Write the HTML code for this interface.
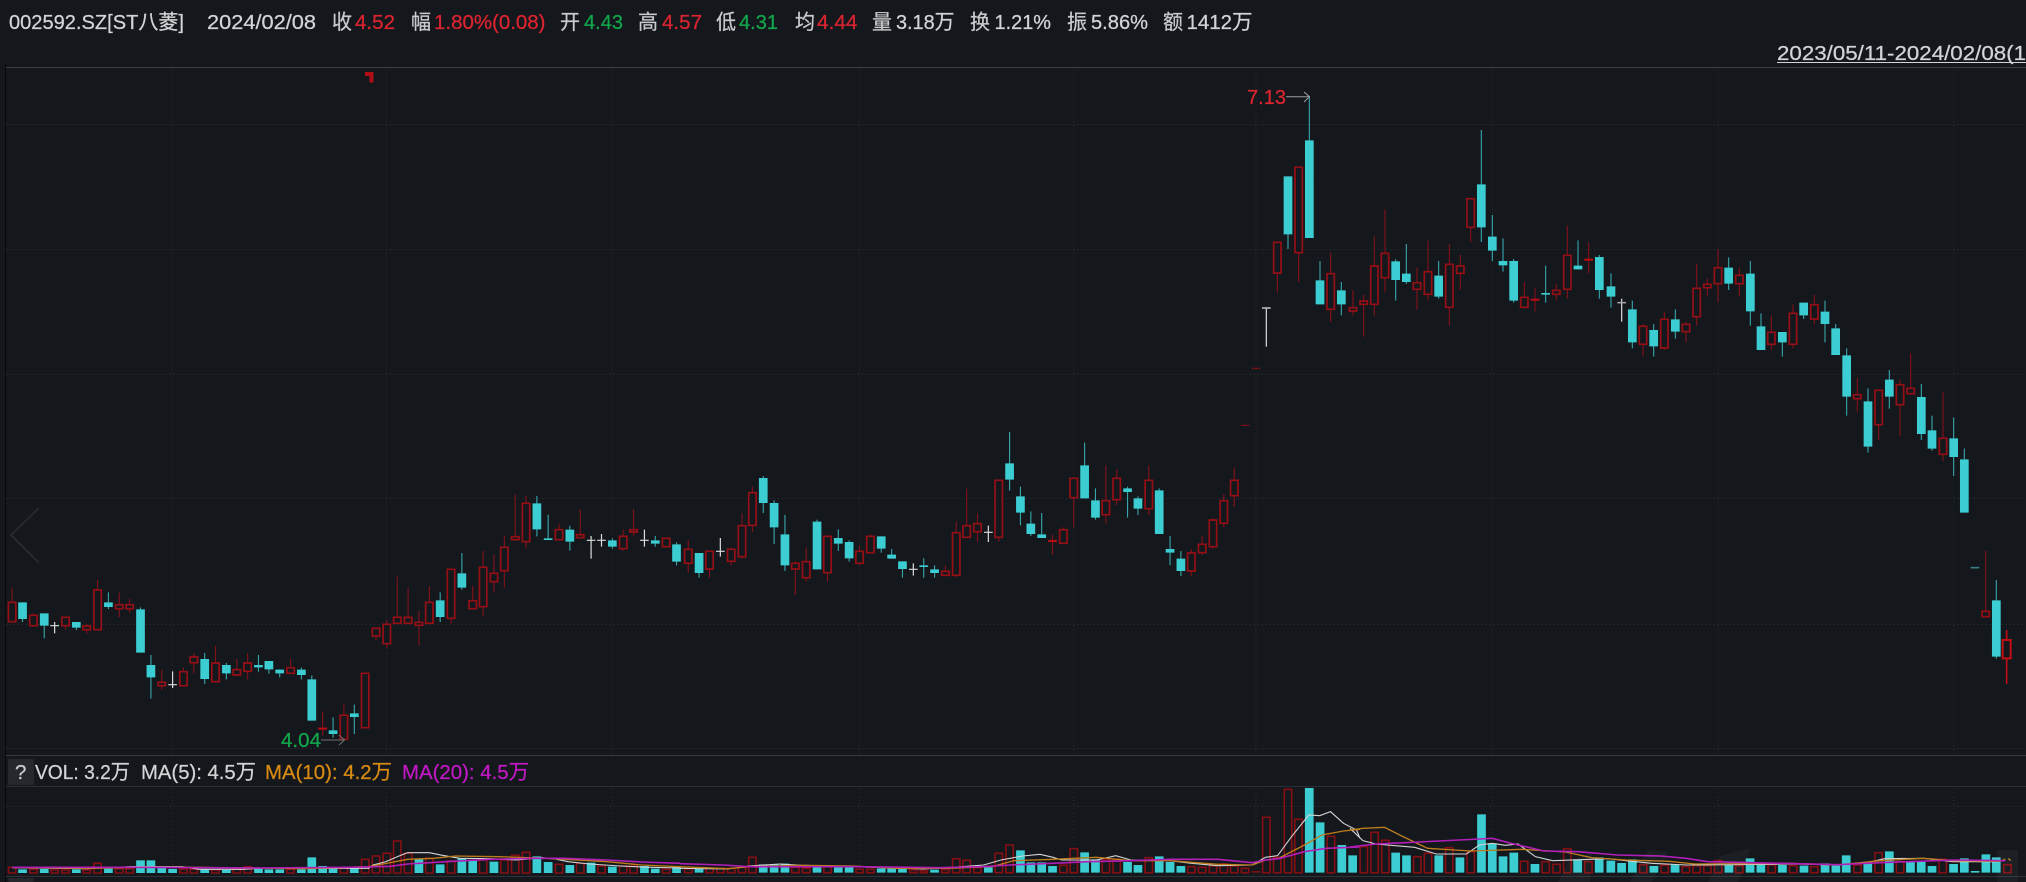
<!DOCTYPE html>
<html>
<head>
<meta charset="utf-8">
<title>002592.SZ</title>
<style>
html,body{margin:0;padding:0;background:#14181d;width:2026px;height:882px;overflow:hidden}
svg{display:block;position:absolute;left:0;top:0}
path,polyline{vector-effect:non-scaling-stroke}
text{font-family:"Liberation Sans","Noto Sans CJK SC",sans-serif;font-size:20.500px;stroke-width:.25px}
.w{fill:none;stroke:#84101a;stroke-width:1.1}
.t{fill:none;stroke:#37a6ab;stroke-width:1.1}
.rb{fill:#14181d;stroke:#950f15;stroke-width:1.7}
.tb{fill:none;stroke:#3bcdd2;stroke-width:8.7}
.wh{fill:none;stroke:#dcdcdc;stroke-width:1.2}
.dr{fill:none;stroke:#b50d12;stroke-width:2.2}
.vr{fill:none;stroke:#860f14;stroke-width:1.6}
.ma5{fill:none;stroke:#d4d4d4;stroke-width:1.1}
.ma10{fill:none;stroke:#bd7d1c;stroke-width:1.3}
.ma20{fill:none;stroke:#b21eb8;stroke-width:1.6}
.l{fill:#c8cacc;stroke:#c8cacc}
.v{fill:#d2d4d6;stroke:#d2d4d6}
.r{fill:#dc2430;stroke:#dc2430}
.g{fill:#12a64b;stroke:#12a64b}
.o{fill:#d98a12;stroke:#d98a12}
.m{fill:#c318c6;stroke:#c318c6}
</style>
</head>
<body>
<svg width="2026" height="882" viewBox="0 0 2026 882" xmlns="http://www.w3.org/2000/svg">
<rect width="2026" height="882" fill="#14181d"/>

<!-- grid -->
<g fill="none" stroke="#30343a" stroke-width="1" stroke-dasharray="1 3">
<path d="M6 124.500H2026M6 249.500H2026M6 374.500H2026M6 498.500H2026M6 624.500H2026M6 748.500H2026M6 806.500H2026"/>
</g>
<g fill="none" stroke="#2a2e33" stroke-width="1" stroke-dasharray="1 3">
<path d="M172.500 69V755M386.500 69V755M612.500 69V755M859.500 69V755M1073.500 69V755M1256 69V755M1492.500 69V755M1718 69V755M1953.500 69V755"/>
<path d="M172.500 788V875M386.500 788V875M612.500 788V875M859.500 788V875M1073.500 788V875M1256 788V875M1492.500 788V875M1718 788V875M1953.500 788V875"/>
</g>
<!-- frame lines -->
<rect x="6" y="67" width="2020" height="1" fill="#3c3f44"/>
<rect x="5" y="64" width="1" height="818" fill="#08090b"/>
<rect x="6" y="755" width="2020" height="1" fill="#35383d"/>
<rect x="6" y="786" width="2020" height="1" fill="#2b2e33"/>
<rect x="6" y="876" width="2020" height="1" fill="#2f3237"/>
<rect x="8" y="878" width="26" height="4" rx="2" fill="#24272b"/>

<!-- header -->
<text class="v" x="9" y="29" textLength="175" lengthAdjust="spacingAndGlyphs">002592.SZ[ST八菱]</text>
<text class="v" x="207" y="29" textLength="109" lengthAdjust="spacingAndGlyphs">2024/02/08</text>
<text class="l" x="332" y="29" textLength="20" lengthAdjust="spacingAndGlyphs">收</text><text class="r" x="355" y="29" textLength="40" lengthAdjust="spacingAndGlyphs">4.52</text>
<text class="l" x="411" y="29" textLength="20" lengthAdjust="spacingAndGlyphs">幅</text><text class="r" x="434" y="29" textLength="111.500" lengthAdjust="spacingAndGlyphs">1.80%(0.08)</text>
<text class="l" x="560" y="29" textLength="20" lengthAdjust="spacingAndGlyphs">开</text><text class="g" x="584" y="29" textLength="39" lengthAdjust="spacingAndGlyphs">4.43</text>
<text class="l" x="638" y="29" textLength="20" lengthAdjust="spacingAndGlyphs">高</text><text class="r" x="662" y="29" textLength="40" lengthAdjust="spacingAndGlyphs">4.57</text>
<text class="l" x="716" y="29" textLength="20" lengthAdjust="spacingAndGlyphs">低</text><text class="g" x="739" y="29" textLength="39" lengthAdjust="spacingAndGlyphs">4.31</text>
<text class="l" x="795" y="29" textLength="20" lengthAdjust="spacingAndGlyphs">均</text><text class="r" x="817" y="29" textLength="40.500" lengthAdjust="spacingAndGlyphs">4.44</text>
<text class="l" x="872" y="29" textLength="20" lengthAdjust="spacingAndGlyphs">量</text><text class="v" x="896" y="29" textLength="58.500" lengthAdjust="spacingAndGlyphs">3.18万</text>
<text class="l" x="970" y="29" textLength="20" lengthAdjust="spacingAndGlyphs">换</text><text class="v" x="994.500" y="29" textLength="56.500" lengthAdjust="spacingAndGlyphs">1.21%</text>
<text class="l" x="1067" y="29" textLength="20" lengthAdjust="spacingAndGlyphs">振</text><text class="v" x="1091" y="29" textLength="57" lengthAdjust="spacingAndGlyphs">5.86%</text>
<text class="l" x="1163" y="29" textLength="20" lengthAdjust="spacingAndGlyphs">额</text><text class="v" x="1186.500" y="29" textLength="66" lengthAdjust="spacingAndGlyphs">1412万</text>

<text class="v" x="1777" y="60" textLength="249" lengthAdjust="spacingAndGlyphs">2023/05/11-2024/02/08(1</text>
<rect x="1777" y="62" width="249" height="1" fill="#d2d4d6"/>

<!-- red flag marker -->
<path d="M365 72H373.500V82.500H369.500V76H365Z" fill="#b00d14"/>

<!-- left chevron -->
<polyline points="39,508 11,535 39,562.700" fill="none" stroke="#25282c" stroke-width="2"/>

<!-- candles A -->
<g transform="translate(0 480) scale(.43367 .33333)">
<path class="w" d="M28 323V425M77 400V437M151 412V449M200 432V461M225 300V449M275 338V411M299 355V399M373 569V630M423 563V617M447 519V580M497 498V605M546 537V585M571 519V598M670 537V580M744 694V767M793 674V778M867 444V480M892 420V505M916 289V430M941 324V430M966 393V497M990 318V430M1040 268V431M1090 318V386M1114 213V410M1139 224V338M1163 168V323M1188 43V179M1213 48V206M1289 131V179M1338 87V173M1437 149V212M1461 87V168"/>
<path class="t" d="M52 367V426M102 400V475M176 426V450M250 337V387M324 382V518M348 525V656M472 519V612M522 549V598M596 525V575M620 543V581M645 568V592M695 563V598M719 586V722M768 712V773M817 674V762M1015 337V426M1065 219V329M1238 48V169M1264 104V180M1314 137V212M1412 175V206M1511 168V200M1560 187V256"/>
<path class="rb" d="M28 367h8.500V425h-17V367zM77 406h8.500V437h-17V406zM151 412h8.500V437h-17V412zM200 438h8.500V449h-17V438zM225 330h8.500V449h-17V330zM275 374h8.500V386h-17V374zM299 374h8.500V386h-17V374zM373 607h8.500V617h-17V607zM423 575h8.500V617h-17V575zM447 531h8.500V548h-17V531zM497 549h8.500V605h-17V549zM546 569h8.500V585h-17V569zM571 549h8.500V574h-17V549zM670 563h8.500V580h-17V563zM793 706h8.500V778h-17V706zM842 580h8.500V743h-17V580zM867 445h8.500V468h-17V445zM892 433h8.500V491h-17V433zM916 412h8.500V430h-17V412zM941 412h8.500V430h-17V412zM966 427h8.500V436h-17V427zM990 367h8.500V430h-17V367zM1040 268h8.500V415h-17V268zM1090 362h8.500V386h-17V362zM1114 262h8.500V380h-17V262zM1139 280h8.500V305h-17V280zM1163 202h8.500V272h-17V202zM1188 170h8.500V179h-17V170zM1213 70h8.500V185h-17V70zM1289 149h8.500V179h-17V149zM1338 164h8.500V173h-17V164zM1437 169h8.500V206h-17V169zM1461 149h8.500V156h-17V149zM1536 175h8.500V200h-17V175z"/>
<path class="tb" d="M52 367V417M102 400V437M176 426V443M250 367V381M324 388V518M348 555V592M472 537V597M522 555V580M596 555V562M620 543V568M645 569V580M695 569V585M719 598V722M768 751V762M817 700V711M1015 361V411M1065 280V323M1238 70V148M1264 175V180M1314 149V185M1412 181V200M1511 181V191M1560 193V245"/>
<path class="wh" d="M126 426V460M116 437h20M398 574V624M388 614h20M1363 168V236M1353 181h20M1387 162V200M1377 181h20M1486 149V200M1476 181h20"/>
<path class="dr" d="M734 746h20"/>
</g>

<!-- candles B -->
<g transform="translate(680 400) scale(.43367 .33333)">
<path class="w" d="M19 420V518M68 454V533M118 442V496M143 340V476M167 260V396M266 484V584M291 442V545M340 409V545M414 438V496M439 403V458M612 496V526M637 365V532M661 266V412M686 340V426M735 241V425M859 403V464M884 382V430M908 235V382M982 196V370M1007 208V315M1081 196V345M1179 447V528M1204 408V465M1229 355V446M1254 283V382M1278 202V321"/>
<path class="t" d="M44 459V533M192 228V339M217 301V432M242 345V513M316 359V508M365 388V453M390 421V485M464 409V458M488 447V476M513 484V533M562 475V533M587 496V533M760 96V272M785 260V376M809 334V408M834 339V414M933 128V295M958 265V359M1032 260V353M1056 289V345M1105 265V402M1130 408V496M1155 453V528"/>
<path class="rb" d="M19 448h8.500V490h-17V448zM68 454h8.500V507h-17V454zM118 448h8.500V484h-17V448zM143 377h8.500V470h-17V377zM167 278h8.500V376h-17V278zM266 490h8.500V507h-17V490zM291 485h8.500V533h-17V485zM340 409h8.500V518h-17V409zM414 454h8.500V490h-17V454zM439 409h8.500V458h-17V409zM612 514h8.500V526h-17V514zM637 398h8.500V526h-17V398zM661 377h8.500V412h-17V377zM686 371h8.500V395h-17V371zM735 241h8.500V412h-17V241zM884 389h8.500V430h-17V389zM908 235h8.500V293h-17V235zM982 302h8.500V344h-17V302zM1007 235h8.500V299h-17V235zM1081 241h8.500V326h-17V241zM1179 459h8.500V513h-17V459zM1204 433h8.500V458h-17V433zM1229 360h8.500V440h-17V360zM1254 302h8.500V370h-17V302zM1278 241h8.500V287h-17V241z"/>
<path class="tb" d="M44 459V519M192 234V309M217 309V382M242 403V496M316 365V508M365 414V431M390 426V475M464 409V446M488 464V476M513 484V507M562 496V501M587 508V519M760 190V239M785 289V338M809 371V402M834 403V414M933 196V295M958 301V353M1032 265V276M1056 295V326M1105 271V402M1130 447V458M1155 476V513"/>
<path class="wh" d="M93 414V470M83 454h20M538 490V527M528 508h20M711 377V426M701 397h20"/>
<path class="dr" d="M849 423h20"/>
<path class="w" d="M1293 76h20"/>
</g>

<!-- candles C -->
<g transform="translate(1200 80) scale(.33333)">
<path class="w" d="M155 865h26M232 487V638M296 262V606M392 518V726M459 630V706M491 645V770M523 470V706M555 388V638M651 563V688M684 482V662M748 492V738M781 525V630M812 356V486M973 606V682M1005 625V694M1069 612V662M1102 437V656M1166 487V580"/>
<path class="t" d="M264 289V507M328 50V474M360 543V673M424 606V706M587 538V662M619 492V612M716 543V656M844 150V486M877 405V543M909 475V575M941 537V668M1037 557V668M1134 481V568M1198 525V656M1233 580V683"/>
<path class="rb" d="M232 487h11V579h-22V487zM296 262h11V518h-22V262zM392 581h11V688h-22V581zM459 683h11V693h-22V683zM491 663h11V673h-22V663zM523 558h11V673h-22V558zM555 520h11V593h-22V520zM651 608h11V628h-22V608zM684 575h11V643h-22V575zM748 553h11V682h-22V553zM781 558h11V580h-22V558zM812 356h11V442h-22V356zM973 652h11V682h-22V652zM1069 631h11V643h-22V631zM1102 526h11V628h-22V526z"/>
<path class="tb" d="M264 289V463M328 181V474M360 601V673M424 631V673M587 544V600M619 581V606M716 587V650M844 313V442M877 470V512M909 543V556M941 543V662M1037 639V644M1134 557V568M1198 531V630M1233 619V650"/>
<path class="wh" d="M199 684V800"/>
<path fill="none" stroke="#a8a8a8" stroke-width="1.800" d="M186 684h26"/>
<path class="dr" d="M992 659h26M1153 539h26"/>
</g>

<!-- candles D -->
<g transform="translate(1600 220) scale(.33333)">
<path class="w" d="M129 312V410M193 275V390M258 306V367M290 131V317M322 175V230M354 87V247M418 143V230M514 286V390M579 254V385M643 225V312M772 473V575M836 511V660M900 479V648M932 400V521M1029 517V723"/>
<path class="t" d="M97 242V385M161 312V410M226 268V356M386 112V210M451 123V317M483 280V390M547 336V410M611 248V297M675 242V367M707 312V405M740 385V587M804 505V698M868 450V566M964 492V660M996 587V692M1061 593V768M1093 686V718"/>
<path class="rb" d="M129 319h11V373h-22V319zM193 298h11V384h-22V298zM258 313h11V335h-22V313zM290 205h11V290h-22V205zM322 193h11V203h-22V193zM354 143h11V191h-22V143zM418 166h11V191h-22V166zM514 337h11V373h-22V337zM579 280h11V373h-22V280zM643 254h11V297h-22V254zM772 524h11V536h-22V524zM836 511h11V614h-22V511zM900 494h11V554h-22V494zM932 505h11V521h-22V505zM1029 655h11V703h-22V655z"/>
<path class="tb" d="M97 268V367M161 330V379M226 298V335M386 143V191M451 161V274M483 319V390M547 336V367M611 248V286M675 275V312M707 325V405M740 406V530M804 544V680M868 479V530M964 531V642M996 631V686M1061 655V711M1093 718V878"/>
<path class="wh" d="M65 236V305"/>
<path fill="none" stroke="#a8a8a8" stroke-width="1.500" d="M52 248h26"/>
</g>

<!-- candles E -->
<g transform="translate(1700 500) scale(.33333)">
<path fill="none" stroke="#3a7f86" stroke-width="1.600" d="M812 203h26"/>
<path class="w" d="M857 153V350"/>
<path class="rb" d="M857 334h11V350h-22V334z"/>
<path class="t" d="M889 240V476"/>
<path class="tb" d="M889 301V470"/>
<path fill="none" stroke="#c20d12" stroke-width="1.600" d="M920 390V552"/>
<path fill="#14181d" stroke="#c20d12" stroke-width="2" d="M920 420h12V475h-24V420z"/>
</g>

<!-- high / low labels -->
<text class="r" x="1247" y="104" textLength="39" lengthAdjust="spacingAndGlyphs">7.13</text>
<path d="M1286 96.700H1309M1304 92L1309.500 96.700L1304 102" fill="none" stroke="#9a9ea0" stroke-width="1"/>
<text class="g" x="281" y="747" textLength="40" lengthAdjust="spacingAndGlyphs">4.04</text>
<path d="M321 740H344M339 735L344.500 740L339 745" fill="none" stroke="#6e6e6e" stroke-width="1"/>

<!-- volume legend -->
<rect x="8" y="759" width="26" height="26" rx="2" fill="#25282c"/>
<text class="l" x="15" y="779">?</text>
<text class="v" x="35" y="779" textLength="95" lengthAdjust="spacingAndGlyphs">VOL: 3.2万</text>
<text class="v" x="141" y="779" textLength="115" lengthAdjust="spacingAndGlyphs">MA(5): 4.5万</text>
<text class="o" x="265" y="779" textLength="127" lengthAdjust="spacingAndGlyphs">MA(10): 4.2万</text>
<text class="m" x="402" y="779" textLength="127" lengthAdjust="spacingAndGlyphs">MA(20): 4.5万</text>

<!-- volume 1 -->
<g transform="translate(0 750) scale(.43367 .33333)">
<path class="tb" d="M52 358V369M102 357V369M176 358V369M250 356V369M324 331V369M348 331V369M373 352V369M398 357V369M472 358V369M522 360V369M596 357V369M620 358V369M645 358V369M695 358V369M719 322V369M744 348V369M768 352V369M817 354V369M966 328V369M1015 343V369M1065 325V369M1090 333V369M1139 335V369M1238 319V369M1264 336V369M1314 345V369M1363 338V369M1412 350V369M1486 348V369M1511 356V369M1560 350V369"/>
<path class="vr" d="M28 352h8.500V369h-17V352zM77 358h8.500V369h-17V358zM126 360h8.500V369h-17V360zM151 360h8.500V369h-17V360zM200 360h8.500V369h-17V360zM225 340h8.500V369h-17V340zM275 356h8.500V369h-17V356zM299 356h8.500V369h-17V356zM423 358h8.500V369h-17V358zM447 358h8.500V369h-17V358zM497 360h8.500V369h-17V360zM546 358h8.500V369h-17V358zM571 350h8.500V369h-17V350zM670 358h8.500V369h-17V358zM793 354h8.500V369h-17V354zM842 328h8.500V369h-17V328zM867 318h8.500V369h-17V318zM892 310h8.500V369h-17V310zM916 273h8.500V369h-17V273zM941 310h8.500V369h-17V310zM990 325h8.500V369h-17V325zM1040 333h8.500V369h-17V333zM1114 330h8.500V369h-17V330zM1163 330h8.500V369h-17V330zM1188 316h8.500V369h-17V316zM1213 307h8.500V369h-17V307zM1289 343h8.500V369h-17V343zM1338 340h8.500V369h-17V340zM1387 348h8.500V369h-17V348zM1437 348h8.500V369h-17V348zM1461 348h8.500V369h-17V348zM1536 358h8.500V369h-17V358z"/>
<path class="ma5" d="M28 353L200 356L300 350L420 350L460 358L560 358L600 355L850 355L860 345L890 335L920 318L940 308L990 308L1020 316L1060 325L1130 326L1160 328L1190 330L1250 323L1280 327L1310 335L1360 342L1430 348L1500 352L1568 354"/>
<path class="ma10" d="M28 352L200 355L320 352L450 352L560 354L700 356L850 350L900 338L940 328L1000 325L1050 318L1150 320L1260 325L1400 335L1480 345L1568 350"/>
<path class="ma20" d="M28 352L300 352L600 354L800 352L900 349L940 342L1030 335L1130 328L1230 325L1300 325L1400 330L1480 336L1568 340"/>
</g>

<!-- volume 2 -->
<g transform="translate(680 770) scale(.43367 .33333)">
<path class="tb" d="M44 295V308M192 283V308M217 283V308M242 281V308M316 291V308M365 292V308M390 292V308M464 295V308M488 295V308M513 290V308M587 299V308M711 292V308M785 241V308M809 277V308M834 277V308M859 288V308M933 247V308M958 268V308M1032 276V308M1056 285V308M1105 259V308M1130 276V308M1155 288V308M1451 54V308M1476 157V308M1526 225V308M1551 256V308"/>
<path class="vr" d="M19 297h8.500V308h-17V297zM68 295h8.500V308h-17V295zM93 295h8.500V308h-17V295zM118 295h8.500V308h-17V295zM143 292h8.500V308h-17V292zM167 262h8.500V308h-17V262zM266 292h8.500V308h-17V292zM291 295h8.500V308h-17V295zM340 290h8.500V308h-17V290zM414 298h8.500V308h-17V298zM439 298h8.500V308h-17V298zM538 300h8.500V308h-17V300zM562 302h8.500V308h-17V302zM612 299h8.500V308h-17V299zM637 266h8.500V308h-17V266zM661 271h8.500V308h-17V271zM686 293h8.500V308h-17V293zM735 250h8.500V308h-17V250zM760 225h8.500V308h-17V225zM884 286h8.500V308h-17V286zM908 236h8.500V308h-17V236zM982 268h8.500V308h-17V268zM1007 268h8.500V308h-17V268zM1081 263h8.500V308h-17V263zM1179 290h8.500V308h-17V290zM1204 292h8.500V308h-17V292zM1229 288h8.500V308h-17V288zM1254 282h8.500V308h-17V282zM1278 288h8.500V308h-17V288zM1303 295h8.500V308h-17V295zM1352 142h8.500V308h-17V142zM1377 262h8.500V308h-17V262zM1402 58h8.500V308h-17V58zM1426 148h8.500V308h-17V148zM1501 199h8.500V308h-17V199z"/>
<path d="M1328 303V308" fill="none" stroke="#7f0f14" stroke-width="8.700"/>
<path class="ma5" d="M0 295L110 297L160 288L230 282L280 286L400 290L450 292L560 297L620 293L700 285L740 270L790 258L830 253L860 262L880 270L960 270L1005 257L1040 270L1130 272L1180 280L1240 287L1320 285L1350 262L1378 257L1410 200L1450 135L1475 137L1500 125L1530 160L1560 180L1568 205"/>
<path class="ma10" d="M0 290L110 296L160 290L280 286L400 288L500 295L620 295L720 290L770 272L860 268L960 262L1040 272L1130 272L1240 283L1320 285L1350 270L1380 265L1440 225L1480 195L1530 183L1568 178"/>
<path class="ma20" d="M0 281L100 285L160 290L400 290L600 293L700 290L760 285L860 280L940 275L1040 272L1130 268L1240 268L1320 278L1350 270L1380 266L1440 245L1490 235L1568 231"/>
</g>

<!-- volume 3 -->
<g transform="translate(1350 770) scale(.43112 .33333)">
<path class="tb" d="M106 248V308M131 256V308M206 256V308M255 262V308M305 133V308M330 220V308M355 259V308M380 248V308M429 282V308M528 268V308M578 262V308M605 272V308M630 279V308M655 268V308M705 288V308M754 284V308M879 285V308M928 265V308M953 281V308M1003 285V308M1053 287V308M1102 280V308M1127 287V308M1151 256V308M1201 275V308M1251 244V308M1300 276V308M1325 276V308M1350 288V308M1400 282V308M1425 265V308M1450 303V308M1475 253V308M1499 262V308"/>
<path class="vr" d="M32 230h8.500V308h-17V230zM57 187h8.500V308h-17V187zM82 211h8.500V308h-17V211zM156 260h8.500V308h-17V260zM181 250h8.500V308h-17V250zM230 233h8.500V308h-17V233zM280 245h8.500V308h-17V245zM404 274h8.500V308h-17V274zM454 275h8.500V308h-17V275zM479 283h8.500V308h-17V283zM504 236h8.500V308h-17V236zM553 275h8.500V308h-17V275zM680 284h8.500V308h-17V284zM730 286h8.500V308h-17V286zM779 290h8.500V308h-17V290zM804 287h8.500V308h-17V287zM829 287h8.500V308h-17V287zM854 272h8.500V308h-17V272zM903 287h8.500V308h-17V287zM978 285h8.500V308h-17V285zM1028 287h8.500V308h-17V287zM1077 290h8.500V308h-17V290zM1177 285h8.500V308h-17V285zM1226 248h8.500V308h-17V248zM1276 275h8.500V308h-17V275zM1375 268h8.500V308h-17V268zM1525 284h8.500V308h-17V284z"/>
<path class="ma5" d="M0 175L30 212L60 222L150 232L200 252L270 252L300 225L330 220L360 226L390 222L430 260L470 272L600 266L640 272L700 280L780 285L820 285L1030 282L1130 285L1200 278L1240 266L1330 265L1400 275L1500 275"/>
<path class="ma10" d="M0 180L30 175L80 172L120 198L180 235L280 243L400 238L500 246L560 263L640 270L740 274L800 282L1020 280L1130 285L1230 272L1330 265L1400 272L1510 274"/>
<path class="ma20" d="M0 231L60 222L160 216L300 207L330 205L380 222L450 243L530 245L620 255L720 258L780 265L830 275L1000 280L1130 284L1230 278L1400 270L1520 272"/>
<path d="M1515 268h5M1526 266l5 3v4" fill="none" stroke="#b5821f" stroke-width="1.200"/>
</g>

<!-- faint watermark -->
<g fill="#ffffff" fill-opacity=".035">
<path d="M1558 882L1568 862L1592 852L1590 882Z"/>
<path d="M1630 882L1648 850L1668 852L1652 882Z"/>
<path d="M1708 882L1720 856L1751 848L1738 882Z"/>
<path d="M1997 882V850H2018V882Z"/>
</g>
</svg>
</body>
</html>
